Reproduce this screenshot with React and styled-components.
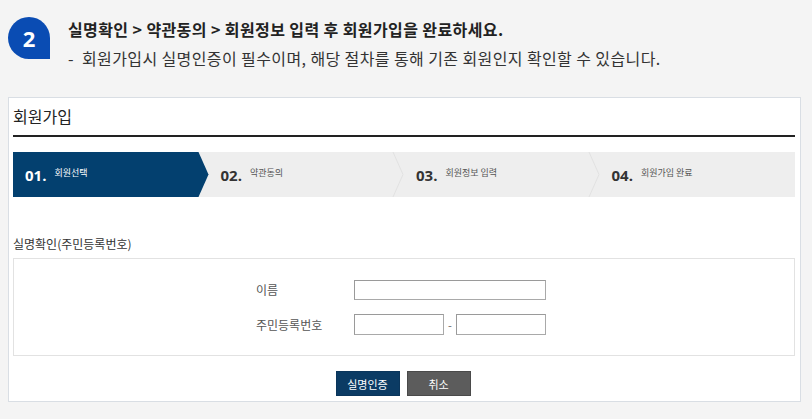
import React from "react";
import styled, { createGlobalStyle } from "styled-components";

const Global = createGlobalStyle`
  html, body { margin: 0; padding: 0; background: #f4f4f4; }
  body { font-family: "Noto Sans CJK KR", "Noto Sans", sans-serif; color: #333; }
  * { box-sizing: border-box; }
`;

const Page = styled.div`
  width: 812px;
  height: 419px;
  padding: 17px 11px 0 8px;
  overflow: hidden;
`;

const Guide = styled.div`
  display: flex;
  align-items: flex-start;
  gap: 18px;
`;

const Badge = styled.div`
  width: 42px;
  height: 42px;
  flex: none;
  background: #0a4cb3;
  color: #fff;
  border-radius: 21px 21px 0 21px;
  display: flex;
  align-items: center;
  justify-content: center;
  font-family: "Open Sans", sans-serif;
  font-weight: 700;
  font-size: 22px;
`;

const GuideText = styled.div`
  display: flex;
  flex-direction: column;
`;

const GuideTitle = styled.div`
  font-size: 16px;
  letter-spacing: 0.4px;
  font-weight: 700;
  color: #222;
  line-height: 24px;
`;

const GuideDesc = styled.div`
  font-size: 16px;
  letter-spacing: 0.4px;
  color: #333;
  line-height: 24px;
  margin-top: 5px;
  white-space: pre;
`;

const Card = styled.div`
  margin-top: 27px;
  background: #fff;
  border: 1px solid #d9dee4;
  padding: 0 5px 5px 4px;
`;

const CardTitle = styled.h2`
  margin: 0;
  height: 39px;
  line-height: 37px;
  font-size: 16px;
  font-weight: 400;
  color: #222;
  border-bottom: 2px solid #222;
`;

const Steps = styled.div`
  margin-top: 15px;
  height: 45px;
  background: #eeeeee;
  display: flex;
`;

const Step = styled.div`
  flex: 1;
  display: flex;
  align-items: center;
  padding-left: 12px;
  background: ${(p) => (p.$active ? "#03406f" : "transparent")};
  clip-path: ${(p) =>
    p.$active
      ? "polygon(0 0, calc(100% - 10px) 0, 100% 50%, calc(100% - 10px) 100%, 0 100%)"
      : "none"};
  color: ${(p) => (p.$active ? "#fff" : "#333")};
`;

const StepNum = styled.span`
  font-family: "Open Sans", sans-serif;
  font-weight: 700;
  font-size: 15px;
  line-height: 20px;
`;

const StepLabel = styled.span`
  font-size: 9px;
  line-height: 12px;
  margin-left: 8px;
  margin-top: -4px;
  color: ${(p) => (p.$active ? "#fff" : "#555")};
`;

const Chevron = styled.svg`
  margin-left: auto;
  flex: none;
  display: block;
`;

const SectionLabel = styled.div`
  margin-top: 37px;
  font-size: 12px;
  line-height: 20px;
  color: #333;
`;

const FormBox = styled.div`
  margin-top: 4px;
  border: 1px solid #e2e2e2;
  padding: 21px 0 20px;
  display: flex;
  justify-content: center;
`;

const FormGrid = styled.div`
  display: grid;
  grid-template-columns: 98px 192px;
  row-gap: 14px;
  align-items: center;
  margin-left: -6px;
`;

const FieldLabel = styled.label`
  font-size: 12px;
  color: #555;
  line-height: 20px;
`;

const Input = styled.input`
  width: ${(p) => p.$w}px;
  height: ${(p) => p.$h || 20}px;
  border: 1px solid #a9a9a9;
  border-top-color: #9a9a9a;
  border-left-color: #9a9a9a;
  background: #fff;
  padding: 0 4px;
  margin: 0;
  outline: none;
`;

const Pair = styled.div`
  display: flex;
  align-items: center;
`;

const Dash = styled.span`
  width: 13px;
  text-align: center;
  font-size: 11px;
  color: #666;
`;

const Buttons = styled.div`
  margin-top: 15px;
  display: flex;
  justify-content: center;
  gap: 7px;
  margin-left: -2px;
`;

const Button = styled.button`
  width: 64px;
  height: 25px;
  border: 1px solid ${(p) => (p.$primary ? "#0a355b" : "#4a4a4a")};
  background: ${(p) => (p.$primary ? "#0b3b64" : "#5c5c5c")};
  color: #fff;
  font-family: "Noto Sans CJK KR", sans-serif;
  font-size: 11px;
  padding: 0;
  cursor: pointer;
`;

const steps = [
  { num: "01.", label: "회원선택" },
  { num: "02.", label: "약관동의" },
  { num: "03.", label: "회원정보 입력" },
  { num: "04.", label: "회원가입 완료" },
];

export default function App() {
  return (
    <>
      <Global />
      <Page>
        <Guide>
          <Badge>2</Badge>
          <GuideText>
            <GuideTitle>실명확인 &gt; 약관동의 &gt; 회원정보 입력 후 회원가입을 완료하세요.</GuideTitle>
            <GuideDesc>-  회원가입시 실명인증이 필수이며, 해당 절차를 통해 기존 회원인지 확인할 수 있습니다.</GuideDesc>
          </GuideText>
        </Guide>
        <Card>
          <CardTitle>회원가입</CardTitle>
          <Steps>
            {steps.map((s, i) => (
              <Step key={s.num} $active={i === 0}>
                <StepNum>{s.num}</StepNum>
                <StepLabel $active={i === 0}>{s.label}</StepLabel>
                {i > 0 && i < 3 && (
                  <Chevron width="12" height="45" viewBox="0 0 12 45">
                    <polyline points="1,0 11,22.5 1,45" fill="none" stroke="#e2e2e2" strokeWidth="1" />
                  </Chevron>
                )}
              </Step>
            ))}
          </Steps>
          <SectionLabel>실명확인(주민등록번호)</SectionLabel>
          <FormBox>
            <FormGrid>
              <FieldLabel>이름</FieldLabel>
              <Input $w={192} $h={20} />
              <FieldLabel>주민등록번호</FieldLabel>
              <Pair>
                <Input $w={90} $h={21} />
                <Dash>-</Dash>
                <Input $w={90} $h={21} />
              </Pair>
            </FormGrid>
          </FormBox>
          <Buttons>
            <Button $primary>실명인증</Button>
            <Button>취소</Button>
          </Buttons>
        </Card>
      </Page>
    </>
  );
}
